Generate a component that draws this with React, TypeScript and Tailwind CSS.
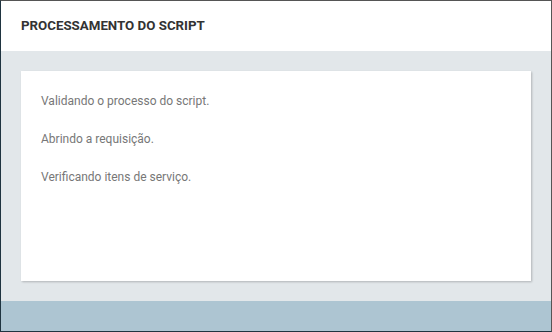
const steps = ["Validando o processo do script.", "Abrindo a requisição.", "Verificando itens de serviço."];

const App = () => {
  return (
    <div className="w-[552px] h-[332px] flex flex-col border border-[#555555] border-l-[#1f3440] border-b-[#1f3440] font-['Roboto',sans-serif] bg-white">
      <div className="h-[50px] shrink-0 flex items-center px-5 bg-white">
        <span className="text-[13.3px] font-bold text-[#333333]">PROCESSAMENTO DO SCRIPT</span>
      </div>
      <div className="flex-1 bg-[#e2e7ea] px-5 pt-5 pb-5 flex flex-col">
        <div className="flex-1 bg-white shadow-[1px_1px_2px_rgba(0,0,0,0.22)] px-5 pt-[21px] pb-5 flex flex-col gap-5">
          {steps.map((s) => (
            <p key={s} className="text-[12px] leading-[18px] text-[#777777]">
              {s}
            </p>
          ))}
        </div>
      </div>
      <div className="h-[30px] shrink-0 bg-[#adc5d2]" />
    </div>
  );
};

export default App;
